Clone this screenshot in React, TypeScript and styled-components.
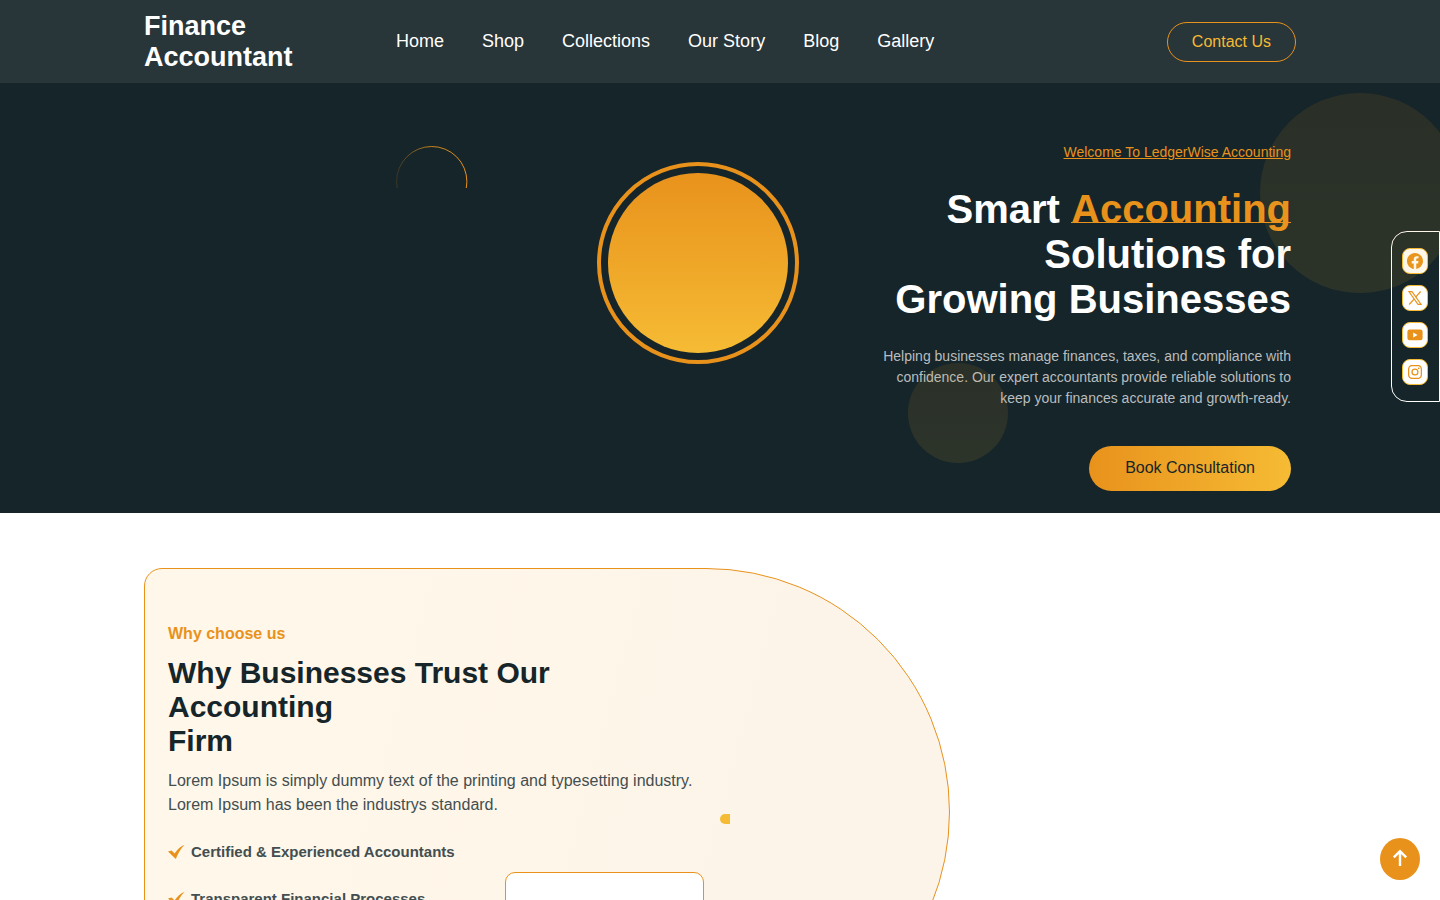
import React from "react";
import styled, { createGlobalStyle } from "styled-components";
import { BsFacebook, BsInstagram } from "react-icons/bs";

const orange = "#e8921c";
const yellow = "#f6bb34";
const dark = "#162529";
const slate = "#434e50";

const GlobalStyle = createGlobalStyle`
  *, *::before, *::after { box-sizing: border-box; }
  body { margin: 0; background: #fff; font-family: "Liberation Sans", Arial, sans-serif; font-size: 16px; }
  h1, h2, p, ul { margin: 0; padding: 0; }
  ul { list-style: none; }
  button { font-family: inherit; cursor: pointer; }
`;

const Page = styled.div`
  overflow-x: clip;
`;

const Container = styled.div`
  width: 80%;
  margin: 0 auto;
`;

const Header = styled.header`
  background: #283539;
  padding: 11px 0 10px;
`;

const HeaderRow = styled(Container)`
  display: flex;
  align-items: center;
`;

const Logo = styled.a`
  flex: 0 0 252px;
  color: #fff;
  font-size: 27px;
  line-height: 31px;
  font-weight: 700;
  text-decoration: none;
`;

const Nav = styled.nav`
  display: flex;
  gap: 38px;
  padding-bottom: 2px;
`;

const NavLink = styled.a`
  color: #fff;
  font-size: 18px;
  line-height: 21px;
  text-decoration: none;
`;

const ContactButton = styled.button`
  margin-left: auto;
  padding: 0 24px;
  height: 40px;
  border: 1px solid ${orange};
  border-radius: 20px;
  background: transparent;
  color: ${yellow};
  font-size: 16px;
`;

const Hero = styled.section`
  position: relative;
  background: ${dark};
  padding: 60px 0 22px;
`;

const HeroRow = styled(Container)`
  display: flex;
  justify-content: flex-end;
  gap: 72px;
  padding-right: 5px;
`;

const Art = styled.div`
  display: flex;
  align-items: flex-start;
  gap: 129px;
`;

const Arc = styled.svg`
  display: block;
  margin-top: 3px;
`;

const Ring = styled.div`
  margin-top: 19px;
  padding: 7px;
  border: 4px solid ${orange};
  border-radius: 50%;
`;

const Disc = styled.div`
  width: 180px;
  height: 180px;
  border-radius: 50%;
  background: linear-gradient(${orange}, ${yellow});
`;

const Bubble = styled.div<{ $size: number }>`
  position: absolute;
  z-index: 3;
  width: ${(p) => p.$size}px;
  height: ${(p) => p.$size}px;
  border-radius: 50%;
  background: linear-gradient(${orange}, ${yellow});
  opacity: 0.1;
  pointer-events: none;
`;

const TopBubble = styled(Bubble)`
  top: 10px;
  right: -20px;
`;

const BottomBubble = styled(Bubble)`
  bottom: 50px;
  right: 30%;
`;

const HeroText = styled.div`
  width: 420px;
  text-align: right;
`;

const Welcome = styled.p`
  color: ${orange};
  font-size: 14px;
  line-height: 18px;
  text-decoration: underline;
`;

const Title = styled.h1`
  margin-top: 26px;
  color: #fff;
  font-size: 40px;
  line-height: 45px;
  font-weight: 700;
`;

const Highlight = styled.span`
  display: inline-block;
  color: ${orange};
  text-decoration: underline 1px;
  text-decoration-skip-ink: none;
  text-underline-offset: -1px;
`;

const HeroCopy = styled.p`
  margin-top: 24px;
  color: #b9bdbf;
  font-size: 14px;
  line-height: 21px;
`;

const BookButton = styled.button`
  display: inline-block;
  margin-top: 37px;
  height: 45px;
  padding: 0 36px 2px;
  border: 0;
  border-radius: 23px;
  background: linear-gradient(90deg, ${orange}, ${yellow});
  color: ${dark};
  font-size: 16px;
  vertical-align: top;
`;

const Social = styled.aside`
  position: fixed;
  z-index: 2;
  top: 231px;
  right: 0;
  display: flex;
  flex-direction: column;
  gap: 11px;
  padding: 16px 11px 16px 10px;
  border: 1px solid #fff;
  border-radius: 16px 0 0 16px;
`;

const SocialLink = styled.a`
  display: flex;
  align-items: center;
  justify-content: center;
  width: 26px;
  height: 26px;
  border: 1px solid ${yellow};
  border-radius: 8px;
  background: #fff;
  color: ${orange};
`;

const Why = styled.section`
  padding: 55px 0;
`;

const Card = styled.div`
  position: relative;
  width: 70%;
  padding: 55px 23px 52px;
  border: 1px solid ${orange};
  border-radius: 18px 244px 244px 18px;
  background: linear-gradient(105deg, #fff7e9 20%, #fcf3e9);
`;

const Eyebrow = styled.p`
  color: ${orange};
  font-size: 16px;
  line-height: 20px;
  font-weight: 700;
`;

const Heading = styled.h2`
  margin-top: 12px;
  color: ${dark};
  font-size: 30px;
  line-height: 34px;
  font-weight: 700;
`;

const Copy = styled.p`
  margin-top: 11px;
  color: ${slate};
  font-size: 16px;
  line-height: 24px;
`;

const CheckList = styled.ul`
  display: flex;
  flex-direction: column;
  gap: 27px;
  margin-top: 25px;
`;

const CheckItem = styled.li`
  display: flex;
  align-items: center;
  gap: 6px;
  color: ${slate};
  font-size: 15px;
  line-height: 20px;
  font-weight: 700;
`;

const Dot = styled.span`
  position: absolute;
  top: 245px;
  left: 575px;
  width: 10px;
  height: 10px;
  border-radius: 5px 0 0 5px;
  background: ${yellow};
`;

const FloatBox = styled.div`
  position: absolute;
  top: 303px;
  left: 360px;
  width: 199px;
  height: 140px;
  border: 1px solid ${orange};
  border-radius: 10px;
  background: #fff;
`;

const TopButton = styled.button`
  position: fixed;
  right: 20px;
  bottom: 20px;
  display: flex;
  align-items: center;
  justify-content: center;
  width: 40px;
  height: 42px;
  padding: 0 0 2px;
  border: 0;
  border-radius: 50%;
  background: ${orange};
`;

const Check = () => (
  <svg width="17" height="16" viewBox="0 0 17 16" aria-hidden="true">
    <path d="M0 7.4 3.6 6.6 6.6 9.4C9.2 5.6 12.4 2.4 16.6 .8 12.8 4.6 9.9 9.4 7.8 15Z" fill={orange} />
  </svg>
);

const XMark = () => (
  <svg width="14" height="14" viewBox="0 0 14 14" fill="none" stroke="currentColor" aria-hidden="true">
    <path d="M.9.6H4L13.1 13.4H10Z" strokeWidth="1.1" />
    <path d="M12.6.5 7.7 6.1M6.3 7.8 1.2 13.5" strokeWidth="1.2" />
  </svg>
);

const YouTubeMark = () => (
  <svg width="16" height="12" viewBox="0 0 16 12" aria-hidden="true">
    <rect x=".4" y=".6" width="15.2" height="10.6" rx="2.2" fill="currentColor" />
    <path d="M6.2 3.4 10.6 5.9 6.2 8.4Z" fill="#fff" />
  </svg>
);

const links = ["Home", "Shop", "Collections", "Our Story", "Blog", "Gallery"];

const socials = [
  { label: "Facebook", icon: <BsFacebook size={16} /> },
  { label: "X", icon: <XMark /> },
  { label: "YouTube", icon: <YouTubeMark /> },
  { label: "Instagram", icon: <BsInstagram size={14} /> },
];

const reasons = [
  "Certified & Experienced Accountants",
  "Transparent Financial Processes",
  "Dedicated Client Support",
  "Secure & Confidential Services",
];

export default function App() {
  return (
    <Page>
      <GlobalStyle />
      <Header>
        <HeaderRow>
          <Logo href="#">
            Finance
            <br />
            Accountant
          </Logo>
          <Nav>
            {links.map((label) => (
              <NavLink href="#" key={label}>
                {label}
              </NavLink>
            ))}
          </Nav>
          <ContactButton type="button">Contact Us</ContactButton>
        </HeaderRow>
      </Header>

      <Hero>
        <HeroRow>
          <Art>
            <Arc width="72" height="42" viewBox="0 0 72 42" aria-hidden="true">
              <defs>
                <linearGradient id="arc" x1="0" x2="1" y1="0" y2="0">
                  <stop offset="0" stopColor={orange} stopOpacity="0.15" />
                  <stop offset="0.5" stopColor={orange} stopOpacity="0.85" />
                  <stop offset="1" stopColor={orange} />
                </linearGradient>
              </defs>
              <circle cx="35.7" cy="35.7" r="35.2" fill="none" stroke="url(#arc)" />
            </Arc>
            <Ring>
              <Disc />
            </Ring>
          </Art>
          <HeroText>
            <Welcome>Welcome To LedgerWise Accounting</Welcome>
            <Title>
              Smart <Highlight>Accounting</Highlight>
              <br />
              Solutions for
              <br />
              Growing Businesses
            </Title>
            <HeroCopy>
              Helping businesses manage finances, taxes, and compliance with confidence. Our expert
              accountants provide reliable solutions to keep your finances accurate and growth-ready.
            </HeroCopy>
            <BookButton type="button">Book Consultation</BookButton>
          </HeroText>
        </HeroRow>
        <TopBubble $size={200} />
        <BottomBubble $size={100} />
      </Hero>

      <Why>
        <Container>
          <Card>
            <Eyebrow>Why choose us</Eyebrow>
            <Heading>
              Why Businesses Trust Our
              <br />
              Accounting
              <br />
              Firm
            </Heading>
            <Copy>
              Lorem Ipsum is simply dummy text of the printing and typesetting industry.
              <br />
              Lorem Ipsum has been the industrys standard.
            </Copy>
            <CheckList>
              {reasons.map((reason) => (
                <CheckItem key={reason}>
                  <Check />
                  {reason}
                </CheckItem>
              ))}
            </CheckList>
            <Dot />
            <FloatBox />
          </Card>
        </Container>
      </Why>

      <Social aria-label="Social links">
        {socials.map(({ label, icon }) => (
          <SocialLink href="#" aria-label={label} key={label}>
            {icon}
          </SocialLink>
        ))}
      </Social>

      <TopButton type="button" aria-label="Back to top">
        <svg width="16" height="18" viewBox="0 0 16 18" fill="none" stroke="#fff" strokeWidth="2.4" aria-hidden="true">
          <path d="M8 17V2.6M1.8 8.4 8 2.2l6.2 6.2" />
        </svg>
      </TopButton>
    </Page>
  );
}
